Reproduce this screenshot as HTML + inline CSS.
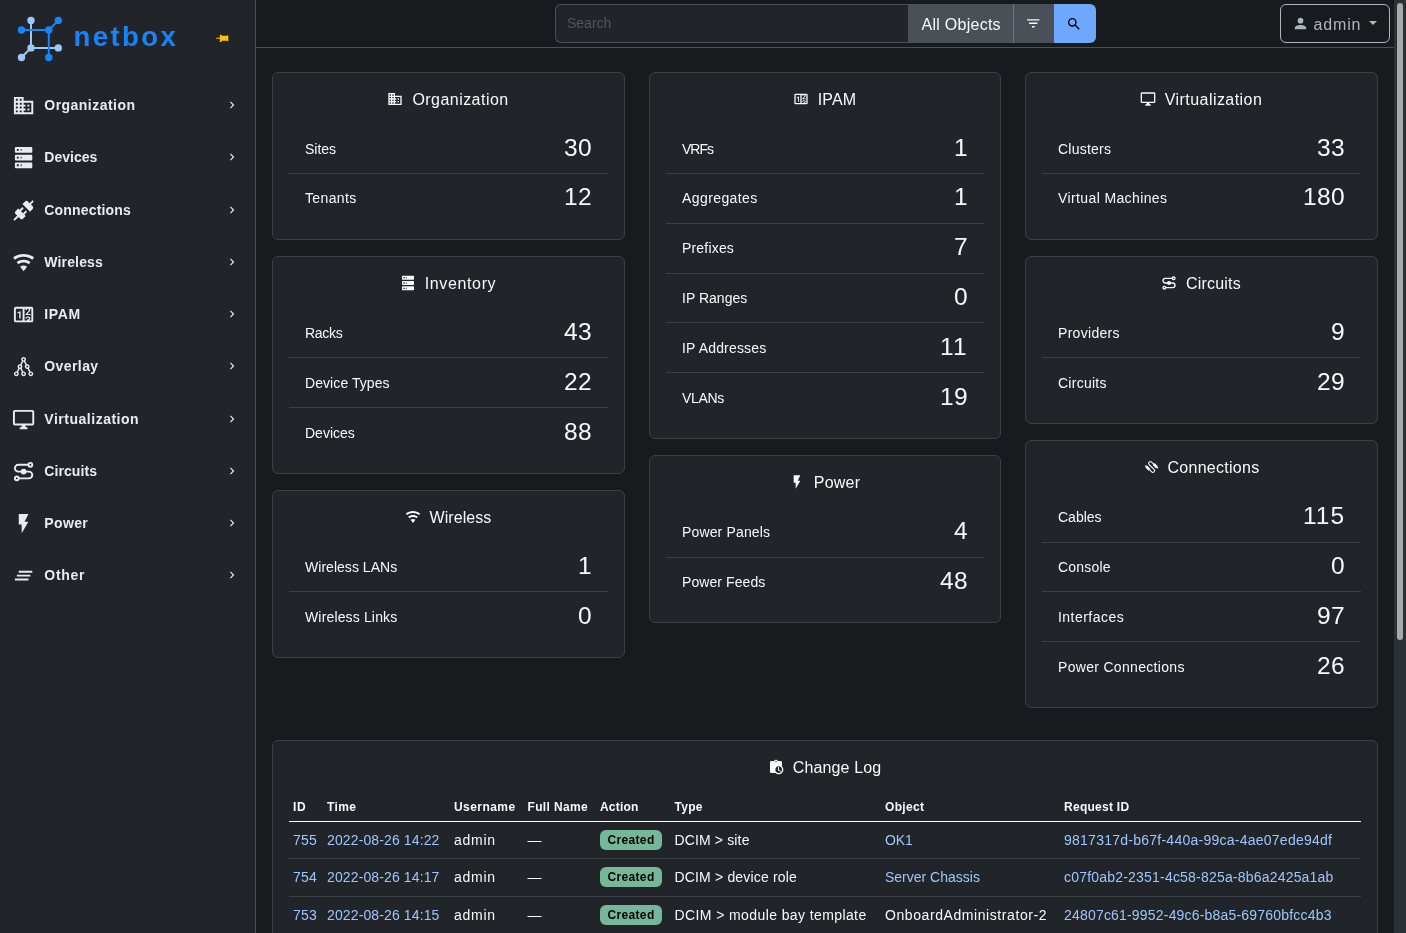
<!DOCTYPE html>
<html lang="en"><head><meta charset="utf-8"><title>Home | NetBox</title>
<style>

*{box-sizing:border-box}
html,body{margin:0;padding:0}
html{background:#171b1d}
body{width:1406px;height:933px;overflow:hidden;position:relative;background:#171b1d;color:#f8f9fa;font-family:"Liberation Sans", sans-serif;font-size:14px;line-height:1.5}
a{color:#9ec5fe;text-decoration:none}
svg.ic{display:block;flex:none}
span{white-space:pre}
#side,#top,#main{will-change:transform}
#side{position:absolute;left:0;top:0;width:256px;height:933px;background:#212529;border-right:1px solid #495057}
#logo{position:absolute;left:0;top:0}
#brand{position:absolute;left:73.6px;top:22.00px;line-height:30px;font-size:27.5px;font-weight:700;color:#1685fc}
#pin{position:absolute;left:214.5px;top:31.4px;color:#ffc107}
.nav{position:absolute;left:0;width:255px;height:42px;color:#e9ecef;font-weight:700;font-size:14px}
.nav .ni{position:absolute;left:11.9px;top:10px}
.nav .nt{position:absolute;left:44.3px;line-height:21px}
.nav .nc{position:absolute;left:224.8px;top:14.1px}
#top{position:absolute;left:256px;top:0;width:1138px;height:48px;border-bottom:1px solid #495057}
#search{position:absolute;left:299px;top:4px;height:39px;width:541px;display:flex}
#q{width:353px;height:39px;border:1px solid #495057;border-right:0;border-radius:6px 0 0 6px;background:#212529;color:#51575d;padding:0 11px;font-size:14px;line-height:21px;padding-top:8.00px}
#allobj{width:105.5px;height:39px;background:#495057;color:#f8f9fa;text-align:center;padding-left:2px;font-size:16px;line-height:24px;padding-top:9.00px;border-right:1px solid #6c757d}
#filt{width:40.5px;height:39px;background:#495057;color:#f8f9fa;position:relative}
#filt svg{position:absolute;left:11.2px;top:11.3px}
#go{width:42px;height:39px;background:#6ea8fe;color:#000;border-radius:0 6px 6px 0;position:relative}
#go svg{position:absolute;left:12.4px;top:12px}
#user{position:absolute;left:1024px;top:4px;width:110px;height:39px;border:1px solid #adb5bd;border-radius:6px;color:#adb5bd;font-size:16px}
#user svg{position:absolute;left:11.4px;top:9.5px}
#user .ut{position:absolute;left:32.5px;top:8.00px;line-height:24px}
#user .caret{position:absolute;left:88px;top:15.7px;width:0;height:0;border-left:4px solid transparent;border-right:4px solid transparent;border-top:4.4px solid #adb5bd}
#sbar{position:absolute;left:1394px;top:0;width:12px;height:933px;background:#2b3035}
#thumb{position:absolute;left:3px;top:3px;width:6px;height:637px;border-radius:3px;background:#a6a9a8}
#main{position:absolute;left:256px;top:48px;width:1138px;height:885px}
.card{position:absolute;background:#212529;border:1px solid #3b4045;border-radius:6px}
.card h5{position:absolute;left:0;right:0;margin:0;height:19px;font-size:16px;font-weight:400;display:flex;align-items:center;justify-content:center;line-height:19px}
.card h5 svg{margin-right:9px;margin-left:-1px;position:relative;top:-1px}
.row{position:absolute;left:16px;right:16px;border-bottom:1px solid #3b4045}
.row.last{border-bottom-color:transparent}
.row .lab{position:absolute;left:16px;font-size:14px;line-height:21px}
.row .num{position:absolute;right:16px;font-size:24.5px;line-height:29px}
table{position:absolute;left:16px;top:49px;border-collapse:separate;border-spacing:0;width:1072px;table-layout:fixed}
th,td{padding:0;text-align:left;white-space:nowrap;overflow:visible;vertical-align:top}
th{height:32px;font-size:12px;font-weight:700;border-bottom:1px solid #f8f9fa;line-height:18px;padding-top:8px}
td{height:37px;font-size:14px;border-bottom:1px solid #3b4045;line-height:21px;padding-top:8px}
tr.r2 td{height:38px}
.badge{display:inline-block;background:#75b798;color:#000;font-size:12px;font-weight:700;border-radius:6px;height:20px;line-height:20px;width:62px;text-align:center;vertical-align:top}

</style></head><body>
<div id="side">
<svg id="logo" width="70" height="70" viewBox="0 0 70 70"><g stroke="#9cc8f8" stroke-width="2" fill="none"><path d="M31,20.4V47.9H58.3M31,47.9L21.5,57.5"/></g><g fill="#9cc8f8"><circle cx="31" cy="20.4" r="3.7"/><circle cx="31" cy="47.9" r="3.7"/><circle cx="58.3" cy="47.9" r="3.7"/><circle cx="21.5" cy="57.5" r="3.7"/></g><g stroke="#1685fc" stroke-width="2" fill="none"><path d="M21.5,30H48.8V57.5M48.8,30L58.3,20.4"/></g><g fill="#1685fc"><circle cx="21.5" cy="30" r="3.7"/><circle cx="48.8" cy="30" r="3.7"/><circle cx="58.3" cy="20.4" r="3.7"/><circle cx="48.8" cy="57.5" r="3.7"/></g></svg>
<div id="brand"><span style="letter-spacing:2.4px">netbox</span></div>
<div id="pin"><svg class="ic" viewBox="0 0 24 24" width="14.5" height="14.5" fill="currentColor" style=""><path transform="rotate(90 12 12)" d="M16,12V4H17V2H7V4H8V12L6,14V16H11.2V22H12.8V16H18V14L16,12Z"/></svg></div>
<div class="nav" style="top:84.00px"><div class="ni"><svg class="ic" viewBox="0 0 24 24" width="23.2" height="23.2" fill="currentColor" style=""><path d="M18,15H16V17H18M18,11H16V13H18M20,19H12V17H14V15H12V13H14V11H12V9H20M10,7H8V5H10M10,11H8V9H10M10,15H8V13H10M10,19H8V17H10M6,7H4V5H6M6,11H4V9H6M6,15H4V13H6M6,19H4V17H6M12,7V3H2V21H22V7H12Z"/></svg></div><div class="nt" style="top:11.00px"><span style="letter-spacing:0.464px;">Organization</span></div><div class="nc"><svg class="ic" viewBox="0 0 24 24" width="14" height="14" fill="currentColor" style=""><path d="M8.59,16.58L13.17,12L8.59,7.41L10,6L16,12L10,18L8.59,16.58Z"/></svg></div></div>
<div class="nav" style="top:136.25px"><div class="ni"><svg class="ic" viewBox="0 0 24 24" width="23.2" height="23.2" fill="currentColor" style=""><path d="M4,1H20A1,1 0 0,1 21,2V6A1,1 0 0,1 20,7H4A1,1 0 0,1 3,6V2A1,1 0 0,1 4,1M4,9H20A1,1 0 0,1 21,10V14A1,1 0 0,1 20,15H4A1,1 0 0,1 3,14V10A1,1 0 0,1 4,9M4,17H20A1,1 0 0,1 21,18V22A1,1 0 0,1 20,23H4A1,1 0 0,1 3,22V18A1,1 0 0,1 4,17M9,5H10V3H9V5M9,13H10V11H9V13M9,21H10V19H9V21M5,3V5H7V3H5M5,11V13H7V11H5M5,19V21H7V19H5Z"/></svg></div><div class="nt" style="top:10.75px"><span style="letter-spacing:0.027px;">Devices</span></div><div class="nc"><svg class="ic" viewBox="0 0 24 24" width="14" height="14" fill="currentColor" style=""><path d="M8.59,16.58L13.17,12L8.59,7.41L10,6L16,12L10,18L8.59,16.58Z"/></svg></div></div>
<div class="nav" style="top:188.50px"><div class="ni"><svg class="ic" viewBox="0 0 24 24" width="23.2" height="23.2" fill="currentColor" style=""><path d="M21.4 7.5C22.2 8.3 22.2 9.6 21.4 10.3L18.6 13.1L10.8 5.3L13.6 2.5C14.4 1.7 15.7 1.7 16.4 2.5L18.2 4.3L21.2 1.3L22.6 2.7L19.6 5.7L21.4 7.5M15.6 13.3L14.2 11.9L11.4 14.7L9.3 12.6L12.1 9.8L10.7 8.4L7.9 11.2L6.4 9.8L3.6 12.6C2.8 13.4 2.8 14.7 3.6 15.4L5.4 17.2L1.4 21.2L2.8 22.6L6.8 18.6L8.6 20.4C9.4 21.2 10.7 21.2 11.4 20.4L14.2 17.6L12.8 16.2L15.6 13.3Z"/></svg></div><div class="nt" style="top:11.50px"><span style="letter-spacing:0.172px;">Connections</span></div><div class="nc"><svg class="ic" viewBox="0 0 24 24" width="14" height="14" fill="currentColor" style=""><path d="M8.59,16.58L13.17,12L8.59,7.41L10,6L16,12L10,18L8.59,16.58Z"/></svg></div></div>
<div class="nav" style="top:240.75px"><div class="ni"><svg class="ic" viewBox="0 0 24 24" width="23.2" height="23.2" fill="currentColor" style=""><path d="M12,21L15.6,16.2C14.6,15.45 13.35,15 12,15C10.65,15 9.4,15.45 8.4,16.2L12,21M12,3C7.95,3 4.21,4.34 1.2,6.6L3,9C5.5,7.12 8.62,6 12,6C15.38,6 18.5,7.12 21,9L22.8,6.6C19.79,4.34 16.05,3 12,3M12,9C9.3,9 6.81,9.89 4.8,11.4L6.6,13.8C8.1,12.67 9.97,12 12,12C14.03,12 15.9,12.67 17.4,13.8L19.2,11.4C17.19,9.89 14.7,9 12,9Z"/></svg></div><div class="nt" style="top:11.25px"><span style="letter-spacing:0.148px;">Wireless</span></div><div class="nc"><svg class="ic" viewBox="0 0 24 24" width="14" height="14" fill="currentColor" style=""><path d="M8.59,16.58L13.17,12L8.59,7.41L10,6L16,12L10,18L8.59,16.58Z"/></svg></div></div>
<div class="nav" style="top:293.00px"><div class="ni"><svg class="ic" viewBox="0 0 24 24" width="23.2" height="23.2" fill="currentColor" style=""><path d="M4,4H20A2,2 0 0,1 22,6V18A2,2 0 0,1 20,20H4A2,2 0 0,1 2,18V6A2,2 0 0,1 4,4M4,6V18H11V6H4M20,18V6H18.76C19,6.54 18.95,7.07 18.95,7.13C18.88,7.8 18.41,8.5 18.24,8.75L15.91,11.3L19.23,11.28L19.24,12.5L14.04,12.47L14,11.47C14,11.47 17.05,8.24 17.2,7.95C17.34,7.67 17.91,6 16.5,6C15.27,6.05 15.41,7.3 15.41,7.3L13.87,7.31C13.87,7.31 13.88,6.65 14.25,6H13V18H15.58L15.57,17.14L16.54,17.13C16.54,17.13 17.45,16.97 17.46,16.08C17.5,15.08 16.65,15.08 16.5,15.08C16.37,15.08 15.43,15.13 15.43,15.95H13.91C13.91,15.95 13.95,13.89 16.5,13.89C19.1,13.89 18.96,15.91 18.96,15.91C18.96,15.91 19,17.16 17.85,17.63L18.37,18H20M8.92,16H7.42V10.2L5.62,10.76V9.53L8.76,8.41H8.92V16Z"/></svg></div><div class="nt" style="top:11.00px"><span style="letter-spacing:0.594px;">IPAM</span></div><div class="nc"><svg class="ic" viewBox="0 0 24 24" width="14" height="14" fill="currentColor" style=""><path d="M8.59,16.58L13.17,12L8.59,7.41L10,6L16,12L10,18L8.59,16.58Z"/></svg></div></div>
<div class="nav" style="top:345.25px"><div class="ni"><svg class="ic" viewBox="0 0 24 24" width="23.2" height="23.2" fill="currentColor" style=""><path d="M19.5 17C19.37 17 19.24 17 19.11 17.04L17.5 13.79C17.95 13.34 18.25 12.71 18.25 12C18.25 10.62 17.13 9.5 15.75 9.5C15.62 9.5 15.5 9.5 15.36 9.54L13.73 6.29C14.21 5.84 14.5 5.21 14.5 4.5C14.5 3.12 13.38 2 12 2S9.5 3.12 9.5 4.5C9.5 5.2 9.79 5.84 10.26 6.29L8.64 9.54C8.5 9.5 8.38 9.5 8.25 9.5C6.87 9.5 5.75 10.62 5.75 12C5.75 12.71 6.04 13.34 6.5 13.79L4.89 17.04C4.76 17 4.63 17 4.5 17C3.12 17 2 18.12 2 19.5C2 20.88 3.12 22 4.5 22S7 20.88 7 19.5C7 18.8 6.71 18.16 6.24 17.71L7.86 14.46C8 14.5 8.12 14.5 8.25 14.5C8.38 14.5 8.5 14.5 8.64 14.46L10.27 17.71C9.8 18.16 9.5 18.8 9.5 19.5C9.5 20.88 10.62 22 12 22S14.5 20.88 14.5 19.5C14.5 18.12 13.38 17 12 17C11.87 17 11.74 17 11.61 17.04L10 13.79C10.46 13.34 10.75 12.71 10.75 12C10.75 11.3 10.46 10.66 10 10.21L11.61 6.96C11.74 7 11.87 7 12 7C12.13 7 12.26 7 12.39 6.96L14 10.21C13.54 10.66 13.25 11.3 13.25 12C13.25 13.38 14.37 14.5 15.75 14.5C15.88 14.5 16 14.5 16.14 14.46L17.77 17.71C17.3 18.16 17 18.8 17 19.5C17 20.88 18.12 22 19.5 22S22 20.88 22 19.5C22 18.12 20.88 17 19.5 17M4.5 20.5C3.95 20.5 3.5 20.05 3.5 19.5S3.95 18.5 4.5 18.5 5.5 18.95 5.5 19.5 5.05 20.5 4.5 20.5M13 19.5C13 20.05 12.55 20.5 12 20.5S11 20.05 11 19.5 11.45 18.5 12 18.5 13 18.95 13 19.5M7.25 12C7.25 11.45 7.7 11 8.25 11S9.25 11.45 9.25 12 8.8 13 8.25 13 7.25 12.55 7.25 12M11 4.5C11 3.95 11.45 3.5 12 3.5S13 3.95 13 4.5 12.55 5.5 12 5.5 11 5.05 11 4.5M14.75 12C14.75 11.45 15.2 11 15.75 11S16.75 11.45 16.75 12 16.3 13 15.75 13 14.75 12.55 14.75 12M19.5 20.5C18.95 20.5 18.5 20.05 18.5 19.5S18.95 18.5 19.5 18.5 20.5 18.95 20.5 19.5 20.05 20.5 19.5 20.5Z"/></svg></div><div class="nt" style="top:10.75px"><span style="letter-spacing:0.411px;">Overlay</span></div><div class="nc"><svg class="ic" viewBox="0 0 24 24" width="14" height="14" fill="currentColor" style=""><path d="M8.59,16.58L13.17,12L8.59,7.41L10,6L16,12L10,18L8.59,16.58Z"/></svg></div></div>
<div class="nav" style="top:397.50px"><div class="ni"><svg class="ic" viewBox="0 0 24 24" width="23.2" height="23.2" fill="currentColor" style=""><path d="M21,16H3V4H21M21,2H3C1.89,2 1,2.89 1,4V16A2,2 0 0,0 3,18H10V20H8V22H16V20H14V18H21A2,2 0 0,0 23,16V4C23,2.89 22.1,2 21,2Z"/></svg></div><div class="nt" style="top:11.50px"><span style="letter-spacing:0.516px;">Virtualization</span></div><div class="nc"><svg class="ic" viewBox="0 0 24 24" width="14" height="14" fill="currentColor" style=""><path d="M8.59,16.58L13.17,12L8.59,7.41L10,6L16,12L10,18L8.59,16.58Z"/></svg></div></div>
<div class="nav" style="top:449.75px"><div class="ni"><svg class="ic" viewBox="0 0 24 24" width="23.2" height="23.2" fill="currentColor" style=""><path d="M17,5H6.5A3.5,3.5 0 0 0 6.5,12H17.5A3.5,3.5 0 0 1 17.5,19H7" fill="none" stroke="currentColor" stroke-width="2"/><circle cx="19" cy="5" r="2" fill="none" stroke="currentColor" stroke-width="2"/><circle cx="5" cy="19" r="2" fill="none" stroke="currentColor" stroke-width="2"/><circle cx="12" cy="12" r="3"/></svg></div><div class="nt" style="top:11.25px"><span style="letter-spacing:0.082px;">Circuits</span></div><div class="nc"><svg class="ic" viewBox="0 0 24 24" width="14" height="14" fill="currentColor" style=""><path d="M8.59,16.58L13.17,12L8.59,7.41L10,6L16,12L10,18L8.59,16.58Z"/></svg></div></div>
<div class="nav" style="top:502.00px"><div class="ni"><svg class="ic" viewBox="0 0 24 24" width="23.2" height="23.2" fill="currentColor" style=""><path d="M7,2V13H10V22L17,10H13L17,2H7Z"/></svg></div><div class="nt" style="top:11.00px"><span style="letter-spacing:0.350px;">Power</span></div><div class="nc"><svg class="ic" viewBox="0 0 24 24" width="14" height="14" fill="currentColor" style=""><path d="M8.59,16.58L13.17,12L8.59,7.41L10,6L16,12L10,18L8.59,16.58Z"/></svg></div></div>
<div class="nav" style="top:554.25px"><div class="ni"><svg class="ic" viewBox="0 0 24 24" width="23.2" height="23.2" fill="currentColor" style=""><path d="M5,13H19V11H5M3,17H17V15H3M7,7V9H21V7"/></svg></div><div class="nt" style="top:10.75px"><span style="letter-spacing:0.706px;">Other</span></div><div class="nc"><svg class="ic" viewBox="0 0 24 24" width="14" height="14" fill="currentColor" style=""><path d="M8.59,16.58L13.17,12L8.59,7.41L10,6L16,12L10,18L8.59,16.58Z"/></svg></div></div>
</div>
<div id="top">
<div id="search"><div id="q"><span style="letter-spacing:-0.008px;">Search</span></div><div id="allobj"><span style="letter-spacing:0.253px;">All Objects</span></div><div id="filt"><svg class="ic" viewBox="0 0 24 24" width="16.5" height="16.5" fill="currentColor" style=""><path d="M6,13H18V11H6M3,6V8H21V6M10,18H14V16H10V18Z"/></svg></div><div id="go"><svg class="ic" viewBox="0 0 24 24" width="16" height="16" fill="currentColor" style=""><path d="M9.5,3A6.5,6.5 0 0,1 16,9.5C16,11.11 15.41,12.59 14.44,13.73L14.71,14H15.5L20.5,19L19,20.5L14,15.5V14.71L13.73,14.44C12.59,15.41 11.11,16 9.5,16A6.5,6.5 0 0,1 3,9.5A6.5,6.5 0 0,1 9.5,3M9.5,5C7,5 5,7 5,9.5C5,12 7,14 9.5,14C12,14 14,12 14,9.5C14,7 12,5 9.5,5Z"/></svg></div></div>
<div id="user"><svg class="ic" viewBox="0 0 24 24" width="17" height="17" fill="currentColor" style=""><path d="M12,4A4,4 0 0,1 16,8A4,4 0 0,1 12,12A4,4 0 0,1 8,8A4,4 0 0,1 12,4M12,14C16.42,14 20,15.79 20,18V20H4V18C4,15.79 7.58,14 12,14Z"/></svg><div class="ut"><span style="letter-spacing:0.844px;">admin</span></div><i class="caret"></i></div>
</div>
<div id="main">
<div class="card" style="left:16px;top:24px;width:353px;height:168px">
<h5 style="top:17px"><svg class="ic" viewBox="0 0 24 24" width="16" height="16" fill="currentColor" style=""><path d="M18,15H16V17H18M18,11H16V13H18M20,19H12V17H14V15H12V13H14V11H12V9H20M10,7H8V5H10M10,11H8V9H10M10,15H8V13H10M10,19H8V17H10M6,7H4V5H6M6,11H4V9H6M6,15H4V13H6M6,19H4V17H6M12,7V3H2V21H22V7H12Z"/></svg><span style="letter-spacing:0.458px;">Organization</span></h5>
<div class="row" style="top:51px;height:50px"><div class="lab" style="top:15px"><span style="letter-spacing:-0.031px;">Sites</span></div><div class="num" style="top:9px"><span style="letter-spacing:0.383px;">30</span></div></div>
<div class="row last" style="top:101px;height:50px"><div class="lab" style="top:14px"><span style="letter-spacing:0.368px;">Tenants</span></div><div class="num" style="top:8px"><span style="letter-spacing:0.383px;">12</span></div></div>
</div>
<div class="card" style="left:16px;top:208px;width:353px;height:218px">
<h5 style="top:17px"><svg class="ic" viewBox="0 0 24 24" width="16" height="16" fill="currentColor" style=""><path d="M4,1H20A1,1 0 0,1 21,2V6A1,1 0 0,1 20,7H4A1,1 0 0,1 3,6V2A1,1 0 0,1 4,1M4,9H20A1,1 0 0,1 21,10V14A1,1 0 0,1 20,15H4A1,1 0 0,1 3,14V10A1,1 0 0,1 4,9M4,17H20A1,1 0 0,1 21,18V22A1,1 0 0,1 20,23H4A1,1 0 0,1 3,22V18A1,1 0 0,1 4,17M9,5H10V3H9V5M9,13H10V11H9V13M9,21H10V19H9V21M5,3V5H7V3H5M5,11V13H7V11H5M5,19V21H7V19H5Z"/></svg><span style="letter-spacing:0.627px;">Inventory</span></h5>
<div class="row" style="top:51px;height:50px"><div class="lab" style="top:15px"><span style="letter-spacing:-0.287px;">Racks</span></div><div class="num" style="top:9px"><span style="letter-spacing:0.383px;">43</span></div></div>
<div class="row" style="top:101px;height:50px"><div class="lab" style="top:15px"><span style="letter-spacing:0.074px;">Device Types</span></div><div class="num" style="top:9px"><span style="letter-spacing:0.383px;">22</span></div></div>
<div class="row last" style="top:151px;height:50px"><div class="lab" style="top:15px"><span style="letter-spacing:0.013px;">Devices</span></div><div class="num" style="top:9px"><span style="letter-spacing:0.383px;">88</span></div></div>
</div>
<div class="card" style="left:16px;top:442px;width:353px;height:168px">
<h5 style="top:17px"><svg class="ic" viewBox="0 0 24 24" width="16" height="16" fill="currentColor" style=""><path d="M12,21L15.6,16.2C14.6,15.45 13.35,15 12,15C10.65,15 9.4,15.45 8.4,16.2L12,21M12,3C7.95,3 4.21,4.34 1.2,6.6L3,9C5.5,7.12 8.62,6 12,6C15.38,6 18.5,7.12 21,9L22.8,6.6C19.79,4.34 16.05,3 12,3M12,9C9.3,9 6.81,9.89 4.8,11.4L6.6,13.8C8.1,12.67 9.97,12 12,12C14.03,12 15.9,12.67 17.4,13.8L19.2,11.4C17.19,9.89 14.7,9 12,9Z"/></svg><span style="letter-spacing:0.061px;">Wireless</span></h5>
<div class="row" style="top:51px;height:50px"><div class="lab" style="top:15px"><span style="letter-spacing:0.032px;">Wireless LANs</span></div><div class="num" style="top:9px"><span style="letter-spacing:0.375px;">1</span></div></div>
<div class="row last" style="top:101px;height:50px"><div class="lab" style="top:15px"><span style="letter-spacing:0.152px;">Wireless Links</span></div><div class="num" style="top:9px"><span style="letter-spacing:0.375px;">0</span></div></div>
</div>
<div class="card" style="left:393px;top:24px;width:352px;height:367px">
<h5 style="top:17px"><svg class="ic" viewBox="0 0 24 24" width="16" height="16" fill="currentColor" style=""><path d="M4,4H20A2,2 0 0,1 22,6V18A2,2 0 0,1 20,20H4A2,2 0 0,1 2,18V6A2,2 0 0,1 4,4M4,6V18H11V6H4M20,18V6H18.76C19,6.54 18.95,7.07 18.95,7.13C18.88,7.8 18.41,8.5 18.24,8.75L15.91,11.3L19.23,11.28L19.24,12.5L14.04,12.47L14,11.47C14,11.47 17.05,8.24 17.2,7.95C17.34,7.67 17.91,6 16.5,6C15.27,6.05 15.41,7.3 15.41,7.3L13.87,7.31C13.87,7.31 13.88,6.65 14.25,6H13V18H15.58L15.57,17.14L16.54,17.13C16.54,17.13 17.45,16.97 17.46,16.08C17.5,15.08 16.65,15.08 16.5,15.08C16.37,15.08 15.43,15.13 15.43,15.95H13.91C13.91,15.95 13.95,13.89 16.5,13.89C19.1,13.89 18.96,15.91 18.96,15.91C18.96,15.91 19,17.16 17.85,17.63L18.37,18H20M8.92,16H7.42V10.2L5.62,10.76V9.53L8.76,8.41H8.92V16Z"/></svg><span style="letter-spacing:0.125px;">IPAM</span></h5>
<div class="row" style="top:51px;height:50px"><div class="lab" style="top:15px"><span style="letter-spacing:-0.977px;">VRFs</span></div><div class="num" style="top:9px"><span style="letter-spacing:0.375px;">1</span></div></div>
<div class="row" style="top:101px;height:50px"><div class="lab" style="top:14px"><span style="letter-spacing:0.408px;">Aggregates</span></div><div class="num" style="top:8px"><span style="letter-spacing:0.375px;">1</span></div></div>
<div class="row" style="top:151px;height:50px"><div class="lab" style="top:14px"><span style="letter-spacing:0.182px;">Prefixes</span></div><div class="num" style="top:8px"><span style="letter-spacing:0.375px;">7</span></div></div>
<div class="row" style="top:201px;height:49px"><div class="lab" style="top:14px"><span style="letter-spacing:0.019px;">IP Ranges</span></div><div class="num" style="top:8px"><span style="letter-spacing:0.375px;">0</span></div></div>
<div class="row" style="top:250px;height:50px"><div class="lab" style="top:15px"><span style="letter-spacing:0.182px;">IP Addresses</span></div><div class="num" style="top:9px"><span style="letter-spacing:1.297px;">11</span></div></div>
<div class="row last" style="top:300px;height:50px"><div class="lab" style="top:15px"><span style="letter-spacing:-0.309px;">VLANs</span></div><div class="num" style="top:9px"><span style="letter-spacing:0.383px;">19</span></div></div>
</div>
<div class="card" style="left:393px;top:407px;width:352px;height:168px">
<h5 style="top:17px"><svg class="ic" viewBox="0 0 24 24" width="16" height="16" fill="currentColor" style=""><path d="M7,2V13H10V22L17,10H13L17,2H7Z"/></svg><span style="letter-spacing:0.231px;">Power</span></h5>
<div class="row" style="top:51px;height:51px"><div class="lab" style="top:15px"><span style="letter-spacing:0.148px;">Power Panels</span></div><div class="num" style="top:9px"><span style="letter-spacing:0.375px;">4</span></div></div>
<div class="row last" style="top:102px;height:49px"><div class="lab" style="top:14px"><span style="letter-spacing:0.080px;">Power Feeds</span></div><div class="num" style="top:8px"><span style="letter-spacing:0.383px;">48</span></div></div>
</div>
<div class="card" style="left:769px;top:24px;width:353px;height:168px">
<h5 style="top:17px"><svg class="ic" viewBox="0 0 24 24" width="16" height="16" fill="currentColor" style=""><path d="M21,16H3V4H21M21,2H3C1.89,2 1,2.89 1,4V16A2,2 0 0,0 3,18H10V20H8V22H16V20H14V18H21A2,2 0 0,0 23,16V4C23,2.89 22.1,2 21,2Z"/></svg><span style="letter-spacing:0.453px;">Virtualization</span></h5>
<div class="row" style="top:51px;height:50px"><div class="lab" style="top:15px"><span style="letter-spacing:0.238px;">Clusters</span></div><div class="num" style="top:9px"><span style="letter-spacing:0.383px;">33</span></div></div>
<div class="row last" style="top:101px;height:50px"><div class="lab" style="top:14px"><span style="letter-spacing:0.385px;">Virtual Machines</span></div><div class="num" style="top:8px"><span style="letter-spacing:0.385px;">180</span></div></div>
</div>
<div class="card" style="left:769px;top:208px;width:353px;height:168px">
<h5 style="top:17px"><svg class="ic" viewBox="0 0 24 24" width="16" height="16" fill="currentColor" style=""><path d="M17,5H6.5A3.5,3.5 0 0 0 6.5,12H17.5A3.5,3.5 0 0 1 17.5,19H7" fill="none" stroke="currentColor" stroke-width="2"/><circle cx="19" cy="5" r="2" fill="none" stroke="currentColor" stroke-width="2"/><circle cx="5" cy="19" r="2" fill="none" stroke="currentColor" stroke-width="2"/><circle cx="12" cy="12" r="3"/></svg><span style="letter-spacing:0.182px;">Circuits</span></h5>
<div class="row" style="top:51px;height:50px"><div class="lab" style="top:15px"><span style="letter-spacing:0.306px;">Providers</span></div><div class="num" style="top:9px"><span style="letter-spacing:0.375px;">9</span></div></div>
<div class="row last" style="top:101px;height:50px"><div class="lab" style="top:15px"><span style="letter-spacing:0.256px;">Circuits</span></div><div class="num" style="top:9px"><span style="letter-spacing:0.383px;">29</span></div></div>
</div>
<div class="card" style="left:769px;top:392px;width:353px;height:268px">
<h5 style="top:17px"><svg class="ic" viewBox="0 0 24 24" width="16" height="16" fill="currentColor" style=""><g transform="rotate(-45 12.94 11.95)"><path d="M7.74,12.6V17.2A2.6,2.6 0 0 0 12.94,17.2V6.75A2.6,2.6 0 0 1 18.14,6.75V11.4" fill="none" stroke="currentColor" stroke-width="1.6"/><path d="M16.14,11H20.14V17.2L19.3,18.4V19.9H16.98V18.4L16.14,17.2Z"/><path d="M9.74,12.9H5.74V6.7L6.58,5.5V4H8.9V5.5L9.74,6.7Z"/></g></svg><span style="letter-spacing:0.273px;">Connections</span></h5>
<div class="row" style="top:51px;height:51px"><div class="lab" style="top:15px"><span style="letter-spacing:-0.010px;">Cables</span></div><div class="num" style="top:9px"><span style="letter-spacing:0.995px;">115</span></div></div>
<div class="row" style="top:102px;height:49px"><div class="lab" style="top:14px"><span style="letter-spacing:0.183px;">Console</span></div><div class="num" style="top:8px"><span style="letter-spacing:0.375px;">0</span></div></div>
<div class="row" style="top:151px;height:50px"><div class="lab" style="top:15px"><span style="letter-spacing:0.464px;">Interfaces</span></div><div class="num" style="top:9px"><span style="letter-spacing:0.383px;">97</span></div></div>
<div class="row last" style="top:201px;height:49px"><div class="lab" style="top:15px"><span style="letter-spacing:0.312px;">Power Connections</span></div><div class="num" style="top:9px"><span style="letter-spacing:0.383px;">26</span></div></div>
</div>
<div class="card" style="left:16px;top:692px;width:1106px;height:260px;border-bottom-left-radius:0;border-bottom-right-radius:0">
<h5 style="top:17.000px"><svg class="ic" viewBox="0 0 24 24" width="16" height="16" fill="currentColor" style=""><path d="M21 11.11V5C21 3.9 20.11 3 19 3H14.82C14.4 1.84 13.3 1 12 1S9.6 1.84 9.18 3H5C3.9 3 3 3.9 3 5V19C3 20.11 3.9 21 5 21H11.11C12.37 22.24 14.09 23 16 23C19.87 23 23 19.87 23 16C23 14.09 22.24 12.37 21 11.11M12 3C12.55 3 13 3.45 13 4S12.55 5 12 5 11 4.55 11 4 11.45 3 12 3M16 21C13.24 21 11 18.76 11 16S13.24 11 16 11 21 13.24 21 16 18.76 21 16 21M16.5 16.25L19.36 17.94L18.61 19.16L15 17V12H16.5V16.25Z"/></svg><span style="letter-spacing:0.120px;">Change Log</span></h5>
<table><colgroup>
<col style="width:34.00px">
<col style="width:127.00px">
<col style="width:73.50px">
<col style="width:72.50px">
<col style="width:74.50px">
<col style="width:210.50px">
<col style="width:179.00px">
<col style="width:301.00px">
</colgroup><thead><tr>
<th style="padding-left:4.00px"><span style="letter-spacing:0.727px;">ID</span></th>
<th style="padding-left:4.00px"><span style="letter-spacing:0.398px;">Time</span></th>
<th style="padding-left:4.00px"><span style="letter-spacing:0.432px;">Username</span></th>
<th style="padding-left:4.00px"><span style="letter-spacing:0.345px;">Full Name</span></th>
<th style="padding-left:4.00px"><span style="letter-spacing:0.208px;">Action</span></th>
<th style="padding-left:4.00px"><span style="letter-spacing:0.293px;">Type</span></th>
<th style="padding-left:4.00px"><span style="letter-spacing:0.312px;">Object</span></th>
<th style="padding-left:4.00px"><span style="letter-spacing:0.270px;">Request ID</span></th>
</tr></thead><tbody>
<tr class="r1">
<td style="padding-left:4.00px"><a><span style="letter-spacing:0.224px;">755</span></a></td>
<td style="padding-left:4.00px"><a><span style="letter-spacing:0.123px;">2022-08-26 14:22</span></a></td>
<td style="padding-left:4.00px"><span style="letter-spacing:0.738px;">admin</span></td>
<td style="padding-left:4.00px"><span style="letter-spacing:0.000px;">—</span></td>
<td style="padding-left:4.00px"><span class="badge"><span style="letter-spacing:0.350px;">Created</span></span></td>
<td style="padding-left:4.00px"><span style="letter-spacing:0.142px;">DCIM &gt; site</span></td>
<td style="padding-left:4.00px"><a><span style="letter-spacing:-0.135px;">OK1</span></a></td>
<td style="padding-left:4.00px"><a><span style="letter-spacing:0.250px;">9817317d-b67f-440a-99ca-4ae07ede94df</span></a></td>
</tr>
<tr class="r2">
<td style="padding-left:4.00px"><a><span style="letter-spacing:0.224px;">754</span></a></td>
<td style="padding-left:4.00px"><a><span style="letter-spacing:0.123px;">2022-08-26 14:17</span></a></td>
<td style="padding-left:4.00px"><span style="letter-spacing:0.738px;">admin</span></td>
<td style="padding-left:4.00px"><span style="letter-spacing:0.000px;">—</span></td>
<td style="padding-left:4.00px"><span class="badge"><span style="letter-spacing:0.350px;">Created</span></span></td>
<td style="padding-left:4.00px"><span style="letter-spacing:0.170px;">DCIM &gt; device role</span></td>
<td style="padding-left:4.00px"><a><span style="letter-spacing:-0.002px;">Server Chassis</span></a></td>
<td style="padding-left:4.00px"><a><span style="letter-spacing:0.201px;">c07f0ab2-2351-4c58-825a-8b6a2425a1ab</span></a></td>
</tr>
<tr class="r3">
<td style="padding-left:4.00px"><a><span style="letter-spacing:0.224px;">753</span></a></td>
<td style="padding-left:4.00px"><a><span style="letter-spacing:0.123px;">2022-08-26 14:15</span></a></td>
<td style="padding-left:4.00px"><span style="letter-spacing:0.738px;">admin</span></td>
<td style="padding-left:4.00px"><span style="letter-spacing:0.000px;">—</span></td>
<td style="padding-left:4.00px"><span class="badge"><span style="letter-spacing:0.350px;">Created</span></span></td>
<td style="padding-left:4.00px"><span style="letter-spacing:0.400px;">DCIM &gt; module bay template</span></td>
<td style="padding-left:4.00px"><span style="letter-spacing:0.577px;">OnboardAdministrator-2</span></td>
<td style="padding-left:4.00px"><a><span style="letter-spacing:0.190px;">24807c61-9952-49c6-b8a5-69760bfcc4b3</span></a></td>
</tr>
</tbody></table></div>
</div>
<div id="sbar"><div id="thumb"></div></div>
</body></html>
